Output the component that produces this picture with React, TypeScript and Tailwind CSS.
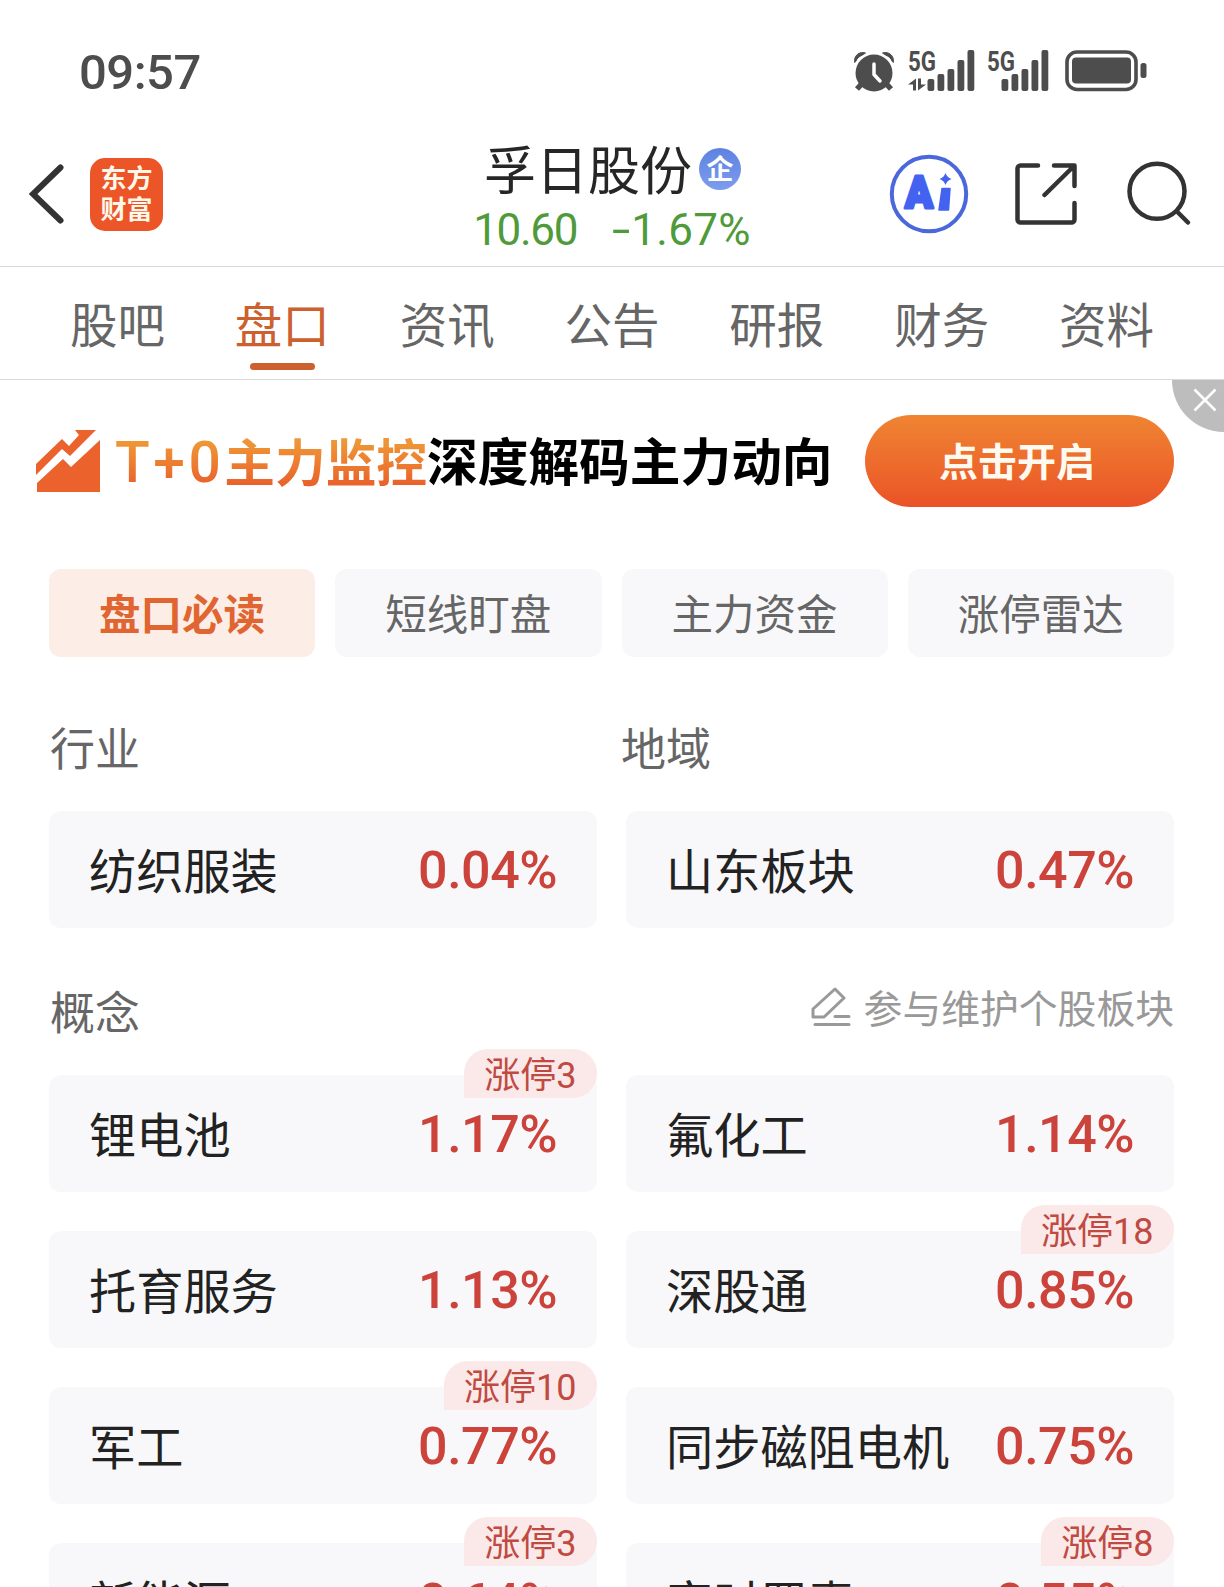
import type { ReactNode } from 'react';

type Sector = { name: string; change: string; limitUp?: number };

const TABS = ['股吧', '盘口', '资讯', '公告', '研报', '财务', '资料'];
const CHIPS = ['盘口必读', '短线盯盘', '主力资金', '涨停雷达'];

const CONCEPTS: Sector[] = [
  { name: '锂电池', change: '1.17%', limitUp: 3 },
  { name: '氟化工', change: '1.14%' },
  { name: '托育服务', change: '1.13%' },
  { name: '深股通', change: '0.85%', limitUp: 18 },
  { name: '军工', change: '0.77%', limitUp: 10 },
  { name: '同步磁阻电机', change: '0.75%' },
  { name: '新能源', change: '0.64%', limitUp: 3 },
  { name: '富时罗素', change: '0.55%', limitUp: 8 },
];

function AlarmIcon() {
  return (
    <svg width="42" height="42" viewBox="0 0 42 42" fill="none">
      <path d="M1.700 12.500C.5 6 6 1 12.500 3L9 5.200C6 6.500 4 8.500 3 11Z M40.300 12.500C41.500 6 36 1 29.500 3L33 5.200C36 6.500 38 8.500 39 11Z" fill="#4d4d4d" stroke="#4d4d4d" strokeLinejoin="round" />
      <circle cx="21" cy="23" r="18.500" fill="#4d4d4d" />
      <path d="M9 33.500l-5 5.500M33 33.500l5 5.500" stroke="#4d4d4d" strokeWidth="5.500" />
      <path d="M21 14v10.500l6 6.500" stroke="#fff" strokeWidth="3.500" strokeLinecap="round" strokeLinejoin="round" />
    </svg>
  );
}

const BARS = [29, 24, 19, 10, 0];

function SignalIcon({ offset, width, arrows }: { offset: number; width: number; arrows?: boolean }) {
  return (
    <svg className="overflow-visible" width={width} height="42" viewBox={`0 0 ${width} 42`} fill="#4d4d4d">
      <text x="0" y="20.500" fontSize="27" fontWeight="700" fontFamily="Roboto, sans-serif" textLength="28" lengthAdjust="spacingAndGlyphs">5G</text>
      {BARS.map((top, i) => (
        <rect key={top} x={offset + i * 10} y={top} width="6.800" height={41 - top} rx="2" />
      ))}
      {arrows && <path d="M8 28.500v12H5v-6H0zM10 28.500h3v6h5L10 40.500z" />}
    </svg>
  );
}

function BatteryIcon() {
  return (
    <svg width="82" height="42" viewBox="0 0 82 42" fill="none">
      <rect x="2" y="2" width="69" height="37.500" rx="10" stroke="#4d4d4d" strokeWidth="3.600" />
      <rect x="7" y="7.500" width="59" height="26" rx="4" fill="#4d4d4d" />
      <rect x="75.500" y="13" width="6" height="15" rx="2.500" fill="#4d4d4d" />
    </svg>
  );
}

function StatusBar() {
  return (
    <div className="flex h-[130px] items-center justify-between pl-[79px] pr-[77px] pt-[12px]">
      <span className="pt-[2px] text-[49px] font-medium leading-none tracking-[-0.500px] text-[#4d4d4d]">09:57</span>
      <div className="flex items-center">
        <AlarmIcon />
        <div className="ml-[13px] flex items-center gap-[12px]">
          <SignalIcon offset={19.5} width={67} arrows />
          <SignalIcon offset={14.5} width={61} />
        </div>
        <div className="ml-[17px]"><BatteryIcon /></div>
      </div>
    </div>
  );
}

function Header() {
  return (
    <header className="grid h-[137px] grid-cols-[1fr_auto_1fr] items-center border-b border-[#d9d9d9] pl-[29px] pr-[32px]">
      <div className="flex items-center gap-[26px] pb-[8px]">
        <svg width="35" height="60" viewBox="0 0 35 60" fill="none" stroke="#333" strokeWidth="6" strokeLinecap="round">
          <path d="M31.500 3.500L4 30L31.500 56.500" />
        </svg>
        <div className="flex h-[73px] w-[73px] flex-col items-center justify-center rounded-[15px] bg-[#eb5528] pt-[2px] text-[26px] font-bold leading-[31px] text-[#fff8e8]">
          <span>东方</span>
          <span>财富</span>
        </div>
      </div>

      <div className="flex flex-col items-center pt-[2px]">
        <div className="flex items-center gap-[7px] pl-[4px] text-[52px] text-[#262626]">
          <span className="pt-[7px] leading-[55px]">孚日股份</span>
          <span className="flex h-[42px] w-[42px] items-center justify-center rounded-full bg-gradient-to-b from-[#5d82e2] to-[#7d9cec] pt-[2px] text-[27px] font-bold leading-none text-white">企</span>
        </div>
        <div className="flex gap-[38px] pl-[3px] text-[44px] leading-[60px] text-[#4f9a3a]">
          <span className="tracking-[-1.300px]">10.60</span>
          <span><span className="mr-[4px] inline-block scale-x-150">-</span><span className="tracking-[0.300px]">1.67%</span></span>
        </div>
      </div>

      <div className="flex items-center justify-end pb-[8px]">
        <svg width="80" height="80" viewBox="0 0 80 80" fill="none">
          <circle cx="40" cy="40" r="37.200" stroke="#4a67dc" strokeWidth="4" />
          <text x="16" y="53.500" fontSize="44" fontWeight="900" fontFamily="Roboto, sans-serif" fill="#4362f0" stroke="#4362f0" strokeWidth="3" strokeLinejoin="round" textLength="28" lengthAdjust="spacingAndGlyphs">A</text>
          <path d="M53 34.500h8l-1.500 21.500h-9.500z" fill="#4362f0" stroke="#4362f0" strokeWidth="1.500" strokeLinejoin="round" />
          <path d="M56.500 19q1.500 4.500 6 6q-4.500 1.500-6 6q-1.500-4.500-6-6q4.500-1.500 6-6z" fill="#4362f0" />
        </svg>
        <svg className="ml-[45px]" width="64" height="64" viewBox="0 0 64 64" fill="none" stroke="#333" strokeWidth="4.500" strokeLinecap="round" strokeLinejoin="round">
          <path d="M24 3.500H6.500a3 3 0 0 0-3 3v51a3 3 0 0 0 3 3h51a3 3 0 0 0 3-3V41M40 3.500h20.500V24M60 4L30.500 33" />
        </svg>
        <svg className="ml-[48px]" width="66" height="66" viewBox="0 0 66 66" fill="none" stroke="#333" strokeWidth="4.500" strokeLinecap="round">
          <circle cx="31" cy="30.300" r="27.500" />
          <path d="M51 50.500L62 61.500" />
        </svg>
      </div>
    </header>
  );
}

function Tabs() {
  return (
    <nav className="flex h-[113px] border-b border-[#d9d9d9] px-[35px]">
      {TABS.map(tab => {
        const active = tab === '盘口';
        return (
          <div key={tab} className={`flex flex-1 flex-col items-center pt-[25px] text-[47.500px] leading-[70px] ${active ? 'text-[#cc612f]' : 'text-[#666]'}`}>
            {tab}
            {active && <span className="mt-[1px] h-[7px] w-[65px] rounded-full bg-[#cc612f]" />}
          </div>
        );
      })}
    </nav>
  );
}

function Banner() {
  return (
    <section className="relative flex h-[162px] items-center pl-[36px] pr-[50px]">
      <svg width="65" height="64" viewBox="0 0 65 64" fill="#eb622c">
        <path d="M0 35L26 10L33 17L43 6L39 1H60L34 27L26 20L0 46Z" />
        <path d="M64 11V63H1V54L27 30L35 38Z" />
      </svg>
      <div className="ml-[14px] flex items-center whitespace-nowrap pt-[5px] text-[50.700px] font-bold leading-[70px]">
        <span className="bg-gradient-to-b from-[#ee9636] from-20% to-[#e9602b] to-80% bg-clip-text text-transparent">
          <span className="text-[57px] font-medium tracking-[3.500px]">T+0</span>主力监控
        </span>
        <span className="text-black">深度解码主力动向</span>
      </div>
      <button className="ml-auto h-[92px] w-[309px] rounded-full bg-gradient-to-b from-[#ef8432] to-[#ea5227] pr-[5px] pt-[4px] text-[39px] font-bold text-[#fffaf0]">点击开启</button>
      <div className="absolute right-0 top-0 flex h-[52px] w-[52px] items-center justify-center rounded-bl-full bg-[#bdbdbd] pl-[13px] pb-[13px]">
        <svg width="24" height="24" viewBox="0 0 24 24" stroke="#fff" strokeWidth="2.500"><path d="M1.500 1.500l21 21M22.500 1.500l-21 21" /></svg>
      </div>
    </section>
  );
}

function SectionLabel({ children }: { children: ReactNode }) {
  return <h2 className="pl-px text-[45px] leading-[60px] text-[#666]">{children}</h2>;
}

function SectorCard({ sector }: { sector: Sector }) {
  return (
    <div className="relative flex h-[117px] items-center justify-between rounded-xl bg-[#f8f8fa] px-[40px]">
      <span className="pt-[6px] text-[47.200px] leading-[70px] text-[#222]">{sector.name}</span>
      <span className="pt-[3px] text-[52px] font-medium leading-[70px] tracking-[-0.500px] text-[#cc433b]">{sector.change}</span>
      {sector.limitUp && (
        <span className="absolute -top-[26px] right-0 h-[49px] rounded-t-[24px] rounded-br-[24px] bg-[#fae9e8] px-[20.500px] text-[36px] leading-[54px] text-[#c04a42]">
          涨停{sector.limitUp}
        </span>
      )}
    </div>
  );
}

export default function App() {
  return (
    <div className="h-[1587px] w-[1224px] overflow-hidden bg-white font-['Roboto','Noto_Sans_CJK_SC',sans-serif]">
      <StatusBar />
      <Header />
      <Tabs />
      <Banner />

      <main className="pl-[49px] pr-[50px] pt-[27px]">
        <div className="grid grid-cols-4 gap-5">
          {CHIPS.map((chip, i) => (
            <div key={chip} className={`h-[88px] rounded-xl text-center text-[41.500px] leading-[93px] ${i === 0 ? 'bg-[#fcede6] font-bold text-[#e06530]' : 'bg-[#f8f8fa] text-[#666]'}`}>
              {chip}
            </div>
          ))}
        </div>

        <div className="mt-[64px] grid grid-cols-2 gap-x-[17px]">
          <SectionLabel>行业</SectionLabel>
          <SectionLabel>地域</SectionLabel>
        </div>
        <div className="mt-[30px] grid grid-cols-2 gap-x-[29px]">
          <SectorCard sector={{ name: '纺织服装', change: '0.04%' }} />
          <SectorCard sector={{ name: '山东板块', change: '0.47%' }} />
        </div>

        <div className="mt-[57px] flex h-[60px] items-center justify-between">
          <SectionLabel>概念</SectionLabel>
          <div className="flex items-center gap-[13px] pb-[15px] text-[38.800px] leading-none text-[#999]">
            <svg width="40" height="40" viewBox="0 0 40 40" fill="none" stroke="#999" strokeWidth="3" strokeLinecap="round" strokeLinejoin="round">
              <path d="M2 22L24 2L33 11L13 30H2ZM24 29.500H38M4 37.500H38" />
            </svg>
            <span className="pt-[6px]">参与维护个股板块</span>
          </div>
        </div>
        <div className="mt-[30px] grid grid-cols-2 gap-x-[29px] gap-y-[39px]">
          {CONCEPTS.map(sector => <SectorCard key={sector.name} sector={sector} />)}
        </div>
      </main>
    </div>
  );
}
